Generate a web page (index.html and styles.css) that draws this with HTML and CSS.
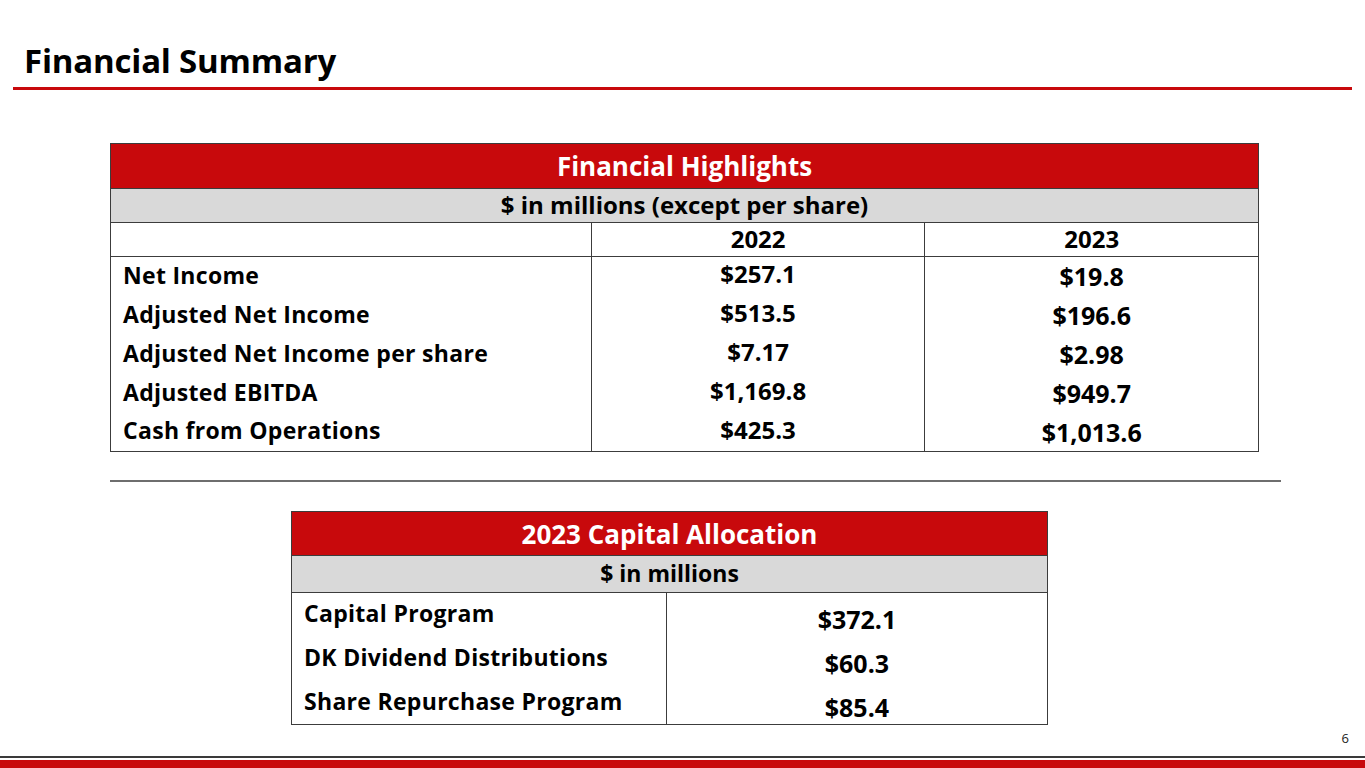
FILE: index.html
```html
<!DOCTYPE html>
<html lang="en">
<head>
<meta charset="utf-8">
<title>Financial Summary</title>
<link rel="stylesheet" href="styles.css">
</head>
<body>
<div class="slide">
  <header class="slide-header">
    <h1 class="slide-title">Financial Summary</h1>
  </header>
  <div class="title-rule"></div>

  <main class="content">
    <table class="fin-table highlights">
      <colgroup>
        <col class="c-label">
        <col class="c-val">
        <col class="c-val">
      </colgroup>
      <tr class="row-head"><th colspan="3">Financial Highlights</th></tr>
      <tr class="row-sub"><th colspan="3">$ in millions (except per share)</th></tr>
      <tr class="row-years"><td></td><td>2022</td><td>2023</td></tr>
      <tr class="row-data"><td class="lbl">Net Income</td><td class="v1">$257.1</td><td class="v2">$19.8</td></tr>
      <tr class="row-data"><td class="lbl">Adjusted Net Income</td><td class="v1">$513.5</td><td class="v2">$196.6</td></tr>
      <tr class="row-data"><td class="lbl">Adjusted Net Income per share</td><td class="v1">$7.17</td><td class="v2">$2.98</td></tr>
      <tr class="row-data"><td class="lbl">Adjusted EBITDA</td><td class="v1">$1,169.8</td><td class="v2">$949.7</td></tr>
      <tr class="row-data last"><td class="lbl">Cash from Operations</td><td class="v1">$425.3</td><td class="v2">$1,013.6</td></tr>
    </table>

    <div class="divider"></div>

    <table class="fin-table capital">
      <colgroup>
        <col class="c2-label">
        <col class="c2-val">
      </colgroup>
      <tr class="row-head"><th colspan="2">2023 Capital Allocation</th></tr>
      <tr class="row-sub"><th colspan="2">$ in millions</th></tr>
      <tr class="row-data"><td class="lbl">Capital Program</td><td class="v3">$372.1</td></tr>
      <tr class="row-data"><td class="lbl">DK Dividend Distributions</td><td class="v3">$60.3</td></tr>
      <tr class="row-data last"><td class="lbl">Share Repurchase Program</td><td class="v3">$85.4</td></tr>
    </table>
  </main>

  <footer class="slide-footer">
    <div class="page-num">6</div>
    <div class="foot-line"></div>
    <div class="foot-band"></div>
  </footer>
</div>
</body>
</html>
```

FILE: styles.css
```css
* { box-sizing: border-box; }
html, body { margin: 0; padding: 0; background: #fff; }
body {
  font-family: "Open Sans", "Liberation Sans", sans-serif;
  color: #000;
}
.slide {
  width: 1365px;
  height: 768px;
  display: flex;
  flex-direction: column;
  overflow: hidden;
}
.slide-header {
  height: 87px;
  padding-left: 24px;
  display: flex;
  align-items: flex-end;
}
.slide-title {
  margin: 0 0 10px 0;
  font-size: 33px;
  font-weight: 700;
  line-height: 1;
  letter-spacing: -0.2px;
}
.title-rule {
  height: 3px;
  margin: 0 13px;
  background: #c8090c;
}
.content {
  flex: 1;
  display: flex;
  flex-direction: column;
}
.fin-table {
  border-collapse: collapse;
  font-weight: 700;
  font-size: 23px;
}
.fin-table th, .fin-table td {
  border: 1px solid #3c3c3c;
  padding: 0;
  line-height: 1;
  vertical-align: middle;
  white-space: nowrap;
}
.fin-table .row-head th {
  background: #c8090c;
  color: #fff;
  font-size: 26px;
  text-align: center;
}
.fin-table .row-sub th {
  background: #d9d9d9;
  text-align: center;
  font-size: 24px;
  padding-bottom: 2px;
}
.fin-table .row-data td { border-top: none; border-bottom: none; }
.fin-table .row-data.last td { border-bottom: 1px solid #3c3c3c; }
.fin-table .lbl {
  text-align: left;
  padding-left: 12px;
  font-size: 23px;
  letter-spacing: 0.3px;
}

/* Highlights table */
.highlights {
  margin: 53px 0 0 110px;
  width: 1149px;
}
.highlights .c-label { width: 481px; }
.highlights .c-val { width: 334px; }
.highlights .row-head th { height: 45px; }
.highlights .row-sub th { height: 34px; }
.highlights .row-years td { height: 34px; text-align: center; font-size: 24px; padding-bottom: 1px; }
.highlights .row-data td { height: 39px; }
.highlights .row-data td.lbl { padding-bottom: 2px; }
.highlights .row-data .v1 { text-align: center; padding-bottom: 4px; font-size: 24px; }
.highlights .row-data .v2 { text-align: center; padding-top: 1px; font-size: 25px; }

.divider {
  margin: 28px 0 0 110px;
  width: 1171px;
  height: 2px;
  background: #6e6e6e;
}

/* Capital table */
.capital {
  margin: 29px 0 0 291px;
  width: 757px;
}
.capital .c2-label { width: 375px; }
.capital .c2-val { width: 382px; }
.capital .row-head th { height: 44px; }
.capital .row-sub th { height: 37px; font-size: 23px; }
.capital .row-data td { height: 44px; }
.capital .row-data td.lbl { padding-bottom: 2px; }
.capital .row-data .v3 { text-align: center; padding-top: 10px; font-size: 25px; }

/* Footer */
.slide-footer {
  display: flex;
  flex-direction: column;
}
.page-num {
  align-self: flex-end;
  margin-right: 16px;
  font-family: "Open Sans", "Liberation Sans", sans-serif;
  font-size: 13px;
  line-height: 1;
  color: #222;
  margin-bottom: 11px;
}
.foot-line {
  height: 2px;
  background: #3a3a3a;
}
.foot-band {
  height: 8px;
  margin-top: 2px;
  background: #c8090c;
}
```
